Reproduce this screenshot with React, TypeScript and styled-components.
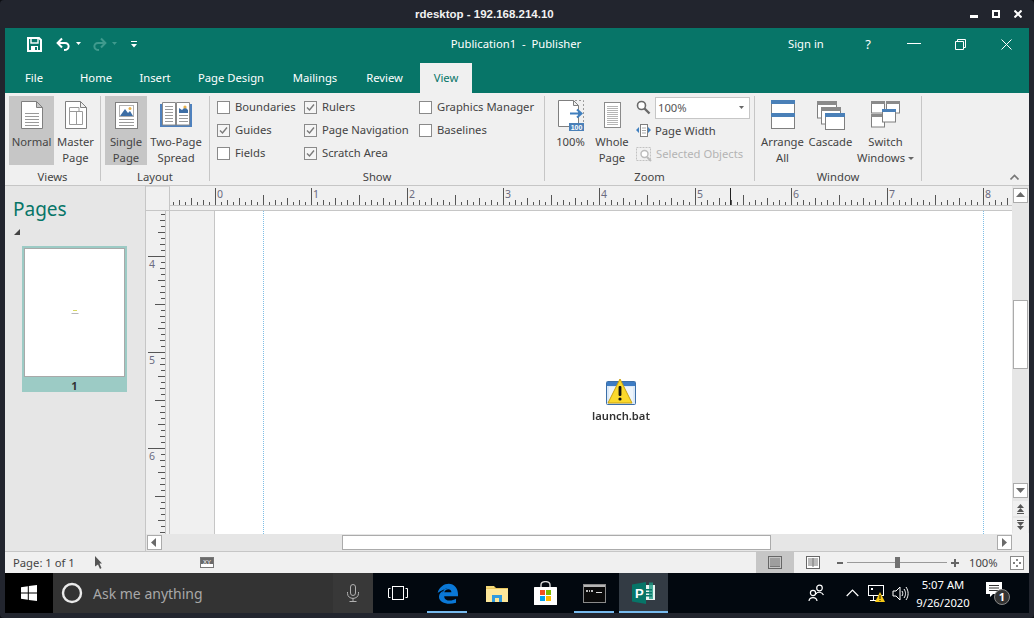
import React from "react";
import styled, { createGlobalStyle } from "styled-components";

const UI = `"Noto Sans", "Open Sans", "Liberation Sans", sans-serif`;
const FS = "11.25px";
const TEAL = "#077568";
const LINE = "#c6c6c6";
const SCROLL = "#ababab";

const Global = createGlobalStyle`
  html, body { margin: 0; padding: 0; background: #0c0e12; overflow: hidden; }
  * { box-sizing: border-box; }
  svg { display: block; flex: none; }
`;

const Frame = styled.div`
  width: 1034px; height: 618px; background: #22252e; display: flex; flex-direction: column;
  padding: 0 5px 5px; border-radius: 4px; font-family: ${UI}; font-size: ${FS}; color: #444;
`;
const TitleBar = styled.div`
  height: 28px; flex: none; display: grid; grid-template-columns: 410px auto 1fr; align-items: center; color: #fff;
`;
const TitleText = styled.div`
  font-family: "Liberation Sans", sans-serif; font-weight: 700; font-size: 11.5px; color: #f2f2f2;
`;
const RemoteControls = styled.div`
  justify-self: end; display: flex; gap: 14px; padding-right: 7px;
`;
const Window = styled.div`
  flex: 1; min-height: 0; display: flex; flex-direction: column; background: #f0f0f0;
`;
const Header = styled.div`
  height: 65px; flex: none; background: ${TEAL}; display: flex; flex-direction: column;
`;
const QatRow = styled.div`
  height: 32px; display: grid; grid-template-columns: 1fr auto 1fr; align-items: center; color: #fff;
`;
const Qat = styled.div`
  display: flex; align-items: center; padding-left: 22px;
`;
const QatItem = styled.span<{ $ml?: number }>`
  margin-left: ${p => p.$ml ?? 0}px; display: block;
`;
const DocTitle = styled.div`
  font-size: ${FS}; color: #fff; white-space: pre; margin: 0 0 2px -2px;
`;
const AccountArea = styled.div`
  justify-self: end; display: flex; align-items: center;
`;
const SignIn = styled.span`
  color: #fff; font-size: ${FS}; width: 57px; margin-bottom: 2px;
`;
const CaptionBtn = styled.span`
  width: 46px; display: flex; justify-content: center; color: #fff; font-size: 13px;
`;
const TabRow = styled.div`
  height: 33px; display: flex; align-items: flex-end;
`;
const Tab = styled.div<{ $w: number; $active?: boolean }>`
  width: ${p => p.$w}px; height: 30px; display: flex; align-items: center; justify-content: center;
  font-size: ${FS}; padding-bottom: 2px;
  color: ${p => (p.$active ? TEAL : "#fff")};
  background: ${p => (p.$active ? "#f0f0f0" : "transparent")};
`;
const Ribbon = styled.div`
  height: 93px; flex: none; display: flex; padding-top: 3px; background: #f0f0f0; border-bottom: 1px solid ${LINE};
`;
const Group = styled.div<{ $w: number }>`
  width: ${p => p.$w}px; height: 85px; display: flex; flex-direction: column;
  border-right: 1px solid ${LINE}; flex: none;
`;
const GroupBody = styled.div<{ $pl: number }>`
  height: 73px; flex: none; display: flex; padding-left: ${p => p.$pl}px;
`;
const GroupLabel = styled.div`
  text-align: center; font-size: ${FS}; line-height: 15px; color: #444;
`;
const BigBtn = styled.div<{ $w: number; $active?: boolean; $ml?: number }>`
  width: ${p => p.$w}px; height: 69px; flex: none; display: flex; flex-direction: column; align-items: center;
  padding-top: 3px; margin-left: ${p => p.$ml ?? 0}px;
  background: ${p => (p.$active ? LINE : "transparent")};
`;
const BigLabel = styled.div`
  margin-top: 3px; text-align: center; line-height: 16px; font-size: ${FS}; white-space: pre; color: #444;
`;
const Caret = styled.i`
  display: inline-block; width: 0; height: 0; border: 3px solid transparent; border-top: 3px solid #666; border-bottom: 0;
  margin-left: 3px; vertical-align: 2px;
`;
const CheckCol = styled.div<{ $w: number }>`
  width: ${p => p.$w}px; display: flex; flex-direction: column;
`;
const CheckRow = styled.div`
  height: 23px; display: flex; align-items: center; gap: 5px; font-size: ${FS}; color: #444; white-space: nowrap;
`;
const CheckText = styled.span`
  margin-bottom: 2px;
`;
const Box = styled.span`
  width: 13px; height: 13px; border: 1px solid #8a8a8a; background: #fff; display: block; flex: none;
`;
const ZoomCol = styled.div`
  margin-left: 4px; display: flex; flex-direction: column; width: 116px;
`;
const ZoomRow = styled.div<{ $off?: boolean }>`
  height: 23px; display: flex; align-items: center; gap: 4px; white-space: nowrap; font-size: ${FS};
  color: ${p => (p.$off ? "#b4b4b4" : "#444")};
`;
const Combo = styled.div`
  width: 95px; height: 22px; border: 1px solid ${LINE}; background: #fff; display: flex; align-items: center;
  justify-content: space-between; padding: 0 5px 0 2px; color: #555; font-size: ${FS};
`;
const Collapse = styled.div`
  flex: 1; display: flex; align-items: flex-end; justify-content: flex-end; padding: 0 10px 5px 0;
`;
const Main = styled.div`
  flex: 1; min-height: 0; display: flex;
`;
const PagesPane = styled.div`
  width: 140px; flex: none; background: #e6e6e6; padding: 9px 0 0 8px;
`;
const PagesTitle = styled.div`
  color: ${TEAL}; font-size: 19px; line-height: 28px; font-weight: 400;
`;
const Expander = styled.div`
  width: 0; height: 0; margin: 6px 0 0 1px; border-left: 6px solid transparent; border-bottom: 6px solid #444;
`;
const Thumb = styled.div`
  margin: 11px 0 0 9px; width: 105px; height: 146px; background: #9ccbc5; padding: 2px; display: flex; flex-direction: column;
`;
const ThumbPage = styled.div`
  height: 129px; flex: none; background: #fff; border: 1px solid #a9a9a9; display: flex; align-items: center; justify-content: center;
`;
const ThumbNum = styled.div`
  flex: 1; text-align: center; font-weight: 700; font-size: 11px; line-height: 15px; color: #333; padding-top: 1px;
`;
const Workspace = styled.div`
  flex: 1; min-width: 0; display: flex; border-left: 1px solid ${LINE};
`;
const CanvasCol = styled.div`
  flex: 1; min-width: 0; display: flex; flex-direction: column;
`;
const RulerRow = styled.div`
  height: 25px; flex: none; display: flex; border-bottom: 1px solid ${LINE}; background: #f0f0f0;
`;
const Corner = styled.div`
  width: 24px; flex: none; border-right: 1px solid ${LINE}; border-top: 1px solid #d8d8d8;
`;
const Body = styled.div`
  flex: 1; min-height: 0; display: flex;
`;
const VRuler = styled.div`
  width: 24px; flex: none; border-right: 1px solid ${LINE}; background: #f0f0f0; overflow: hidden;
`;
const Gutter = styled.div`
  width: 44px; flex: none; background: #f0f0f0;
`;
const Page = styled.div`
  flex: 1; position: relative; background: #fff; border-left: 1px solid ${LINE}; overflow: hidden;
`;
const Guide = styled.div<{ $x: number }>`
  position: absolute; top: 0; bottom: 0; left: ${p => p.$x}px; width: 0; border-left: 1px dotted #7fbfe6;
`;
const DesktopFile = styled.div`
  position: absolute; left: 373px; top: 167px; width: 66px; display: flex; flex-direction: column; align-items: center;
`;
const FileName = styled.div`
  font-size: 11.2px; line-height: 14px; margin-top: 3px; color: #333; font-weight: 600; filter: blur(0.45px);
`;
const HScroll = styled.div`
  height: 17px; flex: none; background: #e6e6e6; display: flex; align-items: center; padding: 0 0 0 1px;
`;
const SBtn = styled.div<{ $plain?: boolean }>`
  width: 15px; height: 15px; flex: none; display: flex; align-items: center; justify-content: center;
  background: ${p => (p.$plain ? "#f0f0f0" : "#fff")}; border: 1px solid ${p => (p.$plain ? "#f0f0f0" : SCROLL)};
`;
const HThumb = styled.div`
  margin-left: 180px; width: 429px; height: 15px; background: #fff; border: 1px solid ${SCROLL}; flex: none;
`;
const Spring = styled.div`
  flex: 1;
`;
const VScroll = styled.div`
  width: 17px; flex: none; display: flex; flex-direction: column; background: #e6e6e6; padding: 2px 0 0 1px;
`;
const VThumb = styled.div`
  margin-top: 97px; width: 15px; height: 69px; background: #fff; border: 1px solid ${SCROLL}; flex: none;
`;
const VSpace = styled.div<{ $h: number }>`
  height: ${p => p.$h}px; flex: none;
`;
const VCorner = styled.div`
  flex: 1; background: #f0f0f0; margin: 0 0 0 -1px;
`;
const StatusBar = styled.div`
  height: 22px; flex: none; display: flex; align-items: center; background: #f0f0f0; border-top: 1px solid ${LINE}; font-size: ${FS}; color: #444;
`;
const StatusText = styled.div<{ $w: number; $ml?: number }>`
  width: ${p => p.$w}px; margin-left: ${p => p.$ml ?? 0}px; white-space: nowrap; flex: none;
`;
const ViewBtn = styled.div<{ $active?: boolean; $mr?: number }>`
  width: 38px; height: 21px; display: flex; align-items: center; justify-content: center; flex: none;
  margin-right: ${p => p.$mr ?? 0}px;
  background: ${p => (p.$active ? LINE : "transparent")};
`;
const Slider = styled.div`
  position: relative; width: 100px; height: 1px; background: #9a9a9a; margin: 0 4px 0 3px; flex: none;
`;
const SliderThumb = styled.div`
  position: absolute; left: 48px; top: -5px; width: 5px; height: 11px; background: #707070;
`;
const Taskbar = styled.div`
  height: 40px; flex: none; display: flex; background: #02080f; color: #fff;
`;
const Start = styled.div`
  width: 48px; background: #000; display: flex; align-items: center; justify-content: center;
`;
const Search = styled.div`
  width: 320px; background: #333; display: flex; align-items: center; padding-left: 8px;
  color: #a8a8a8; font-size: 14px;
`;
const SearchText = styled.span`
  margin-left: 10px; flex: 1;
`;
const MicSlot = styled.div`
  width: 40px; height: 40px; background: #383838; display: flex; align-items: center; justify-content: center;
`;
const TaskItem = styled.div<{ $w?: number; $open?: boolean; $focus?: boolean }>`
  position: relative; width: ${p => p.$w ?? 49}px; flex: none; display: flex; align-items: center; justify-content: center;
  background: ${p => (p.$focus ? "#333b44" : "transparent")};
  ${p => p.$open ? `&::after { content: ""; position: absolute; bottom: 0; left: ${p.$focus ? 0 : 4}px; right: ${p.$focus ? 0 : 5}px; height: 2px; background: #76b9ed; }` : ""}
`;
const Tray = styled.div`
  flex: 1; display: flex; align-items: center; padding-left: 138px;
`;
const TraySlot = styled.div<{ $w: number; $ml?: number }>`
  width: ${p => p.$w}px; margin-left: ${p => p.$ml ?? 0}px; flex: none; display: flex; justify-content: center; align-items: center;
`;
const Clock = styled.div`
  width: 58px; flex: none; text-align: center; font-size: ${FS}; line-height: 18px; color: #fff; margin-left: 2px; white-space: nowrap; padding-top: 1px;
`;

const Lines = ({ x1, x2, ys, c = "#9a9a9a" }: { x1: number; x2: number; ys: number[]; c?: string }) => (
  <>{ys.map(y => <path key={y} d={`M${x1} ${y + 0.5}H${x2}`} stroke={c} />)}</>
);

const Doc = () => (
  <path d="M5.5 2.5H20.5L26.5 8.5V29.5H5.5Z M20.5 2.5V8.5H26.5" fill="#fff" stroke="#7f7f7f" />
);

const NormalIcon = () => (
  <svg width="32" height="32"><Doc /><Lines x1={9} x2={23} ys={[14, 17, 20, 23, 26]} /></svg>
);
const MasterIcon = () => (
  <svg width="32" height="32">
    <Doc />
    <path d="M9.5 8.5H19V12.5H22.5V25.5H9.5Z M9.5 12.5H19 M16.5 12.5V25.5" fill="none" stroke="#9a9a9a" />
  </svg>
);
const SingleIcon = () => (
  <svg width="32" height="32">
    <rect x="5.5" y="3.5" width="22" height="26" fill="#fff" stroke="#7f7f7f" />
    <rect x="9.5" y="6.5" width="14" height="11" fill="#fff" stroke="#b0b0b0" />
    <path d="M10 17L15 10L18 14L20 12L23 17Z" fill="#3d6ea5" />
    <circle cx="20" cy="9.5" r="1.5" fill="#e8b24c" />
    <Lines x1={9} x2={24} ys={[20, 23, 26]} />
  </svg>
);
const SpreadIcon = () => (
  <svg width="32" height="32">
    <path d="M0 5H32V28H0Z" fill="#4f81bd" />
    <path d="M2.5 3.5H15.5V26H2.5Z M16.5 3.5H29.5V26H16.5Z" fill="#fff" stroke="#8a8a8a" />
    <rect x="19" y="6" width="9" height="8" fill="#3d6ea5" />
    <path d="M19 6H28V11L25 8L22 11L19 9Z" fill="#fff" />
    <circle cx="25" cy="8" r="1.6" fill="#e8b24c" />
    <Lines x1={5} x2={13} ys={[7, 10, 13, 16, 19, 22]} />
    <Lines x1={19} x2={28} ys={[16, 19, 22]} />
  </svg>
);
const Zoom100Icon = () => (
  <svg width="32" height="32">
    <path d="M3.5 1.5H18.5L23.5 6.5V27.5H3.5Z M18.5 1.5V6.5H23.5" fill="#fff" stroke="#7f7f7f" />
    <path d="M20 1.5H28.5V24" fill="none" stroke="#9a9a9a" strokeDasharray="2 2" />
    <path d="M15 14.5H26M22 10.5L26.5 14.5L22 18.5" fill="none" stroke="#3f7fbf" strokeWidth="2" />
    <rect x="14" y="24" width="15" height="8" fill="#4a80b8" />
    <text x="21.5" y="31" textAnchor="middle" fontSize="7" fontWeight="700" fontFamily="Liberation Sans" fill="#fff">100</text>
  </svg>
);
const WholeIcon = () => (
  <svg width="32" height="32">
    <rect x="8.5" y="3.5" width="16" height="25" fill="#fff" stroke="#8a8a8a" />
    <Lines x1={11} x2={22} ys={[7, 9, 11, 13, 15, 17, 19, 21, 23, 25]} c="#b5b5b5" />
  </svg>
);
const ArrangeIcon = () => (
  <svg width="32" height="32">
    <rect x="4.5" y="1.5" width="23" height="28" fill="#fff" stroke="#7f7f7f" />
    <rect x="4" y="1" width="24" height="4" fill="#4a80b8" />
    <rect x="4" y="14" width="24" height="4" fill="#4a80b8" />
  </svg>
);
const CascadeIcon = () => (
  <svg width="32" height="32">
    <rect x="2.5" y="3" width="19" height="16" fill="#fff" stroke="#7f7f7f" />
    <rect x="2" y="2" width="20" height="4" fill="#8a8a8a" />
    <rect x="6.5" y="9" width="19" height="16" fill="#fff" stroke="#7f7f7f" />
    <rect x="6" y="8" width="20" height="4" fill="#8a8a8a" />
    <rect x="10.5" y="14.5" width="19" height="16" fill="#fff" stroke="#7f7f7f" />
    <rect x="10" y="14" width="20" height="4" fill="#4a80b8" />
  </svg>
);
const SwitchIcon = () => (
  <svg width="32" height="32">
    <rect x="1.5" y="3" width="13" height="11" fill="#fff" stroke="#7f7f7f" />
    <rect x="1" y="2" width="14" height="3" fill="#8a8a8a" />
    <rect x="16.5" y="3" width="13" height="11" fill="#fff" stroke="#7f7f7f" />
    <rect x="16" y="2" width="14" height="3" fill="#8a8a8a" />
    <rect x="1.5" y="16" width="13" height="12" fill="#fff" stroke="#7f7f7f" />
    <rect x="1" y="15" width="14" height="3" fill="#8a8a8a" />
    <rect x="12.5" y="11" width="13" height="12" fill="#fff" stroke="#7f7f7f" />
    <rect x="12" y="10" width="14" height="3" fill="#4a80b8" />
  </svg>
);
const Magnifier = ({ c = "#6a6a6a" }: { c?: string }) => (
  <svg width="15" height="15">
    <circle cx="5.5" cy="5.5" r="4" fill="#fff" stroke={c} strokeWidth="1.6" />
    <path d="M8.5 8.5L13.5 13.5" stroke={c} strokeWidth="2.4" />
  </svg>
);
const PageWidthIcon = () => (
  <svg width="15" height="15">
    <rect x="4.5" y="1.5" width="7" height="12" fill="#fff" stroke="#7f7f7f" />
    <path d="M6 5H10M6 7.5H10M6 10H10" stroke="#aaa" />
    <path d="M3 4V10L0 7Z M12 4V10L15 7Z" fill="#3f7fbf" />
  </svg>
);
const SelectedIcon = () => (
  <svg width="16" height="16">
    <rect x="0.5" y="1.5" width="14" height="13" fill="none" stroke="#c2c2c2" strokeDasharray="2 1" />
    <circle cx="8.5" cy="8" r="3.5" fill="#fff" stroke="#bbb" strokeWidth="1.4" />
    <path d="M11 11L15 15" stroke="#bbb" strokeWidth="2" />
  </svg>
);

const Check = () => (
  <svg width="13" height="13">
    <rect x="0.5" y="0.5" width="12" height="12" fill="#f5f5f5" stroke="#8a8a8a" />
    <path d="M3 6.5L5.5 9L10 3.5" fill="none" stroke="#7a7a7a" strokeWidth="1.4" />
  </svg>
);
const CheckItem = ({ label, on }: { label: string; on?: boolean }) => (
  <CheckRow>{on ? <Check /> : <Box />}<CheckText>{label}</CheckText></CheckRow>
);

const INCH = 96;
const HRuler = () => {
  const ticks: React.ReactNode[] = [];
  const labels: React.ReactNode[] = [];
  const origin = 45;
  for (let k = -7; k < 136; k++) {
    const x = origin + k * 6;
    if (x > 842) break;
    const m = ((k % 16) + 16) % 16;
    const h = m === 0 ? 17 : m === 8 ? 10 : m % 4 === 0 ? 7 : m % 2 === 0 ? 5 : 3;
    ticks.push(<path key={k} d={`M${x + 0.5} 19V${19 - h}`} stroke="#555" />);
  }
  for (let n = 0; n <= 8; n++) {
    labels.push(
      <text key={n} x={origin + n * INCH + 2} y={12} fontSize="10.5" fontFamily="Noto Sans" fill="#6b6b80">{n}</text>
    );
  }
  return (
    <svg width="843" height="24">
      <rect x="0" y="19" width="843" height="1" fill={LINE} />
      {ticks}
      {labels}
      <path d="M560.5 2V19" stroke="#222" />
    </svg>
  );
};
const VRulerArt = () => {
  const ticks: React.ReactNode[] = [];
  const origin = 45;
  for (let k = -8; k < 48; k++) {
    const y = origin + k * 6;
    const m = ((k % 16) + 16) % 16;
    const w = m === 0 ? 17 : m === 8 ? 10 : m % 4 === 0 ? 7 : m % 2 === 0 ? 5 : 4;
    ticks.push(<path key={k} d={`M${19 - w} ${y + 0.5}H19`} stroke="#555" />);
  }
  return (
    <svg width="23" height="323">
      <rect x="19" y="0" width="1" height="323" fill={LINE} />
      {ticks}
      {[4, 5, 6].map((n, i) => (
        <text key={n} x="3" y={origin + i * INCH + 12} fontSize="10.5" fontFamily="Noto Sans" fill="#6b6b80">{n}</text>
      ))}
    </svg>
  );
};

const Tri = ({ dir, c = "#6a6a6a" }: { dir: "u" | "d" | "l" | "r"; c?: string }) => {
  const d = { u: "M0 6L4.5 1L9 6Z", d: "M0 2L9 2L4.5 7Z", l: "M6 0V9L1 4.5Z", r: "M2 0V9L7 4.5Z" }[dir];
  return <svg width="9" height="9"><path d={d} fill={c} /></svg>;
};
const DoubleUp = () => (
  <svg width="9" height="11"><path d="M1 5L4.5 1L8 5Z M1 9L4.5 5L8 9Z M1 10H8V11H1Z" fill="#555" /></svg>
);
const DoubleDown = () => (
  <svg width="9" height="11"><path d="M1 0H8V1H1Z M1 2L4.5 6L8 2Z M1 6L4.5 10L8 6Z" fill="#555" /></svg>
);

const WarnFile = () => (
  <svg width="32" height="28">
    <rect x="1.5" y="3.5" width="29" height="23" rx="1" fill="#dbe9f7" stroke="#3c6fa8" />
    <rect x="2" y="4" width="28" height="4" fill="#3d7cc4" />
    <rect x="4" y="9" width="24" height="16" fill="#eef5fb" />
    <path d="M15 1L27 25H3Z" fill="#fbd92b" stroke="#c9a010" strokeLinejoin="round" />
    <rect x="13.6" y="8" width="2.8" height="10" rx="1" fill="#111" />
    <circle cx="15" cy="21" r="1.6" fill="#111" />
  </svg>
);

const SaveIcon = () => (
  <svg width="15" height="15">
    <path d="M1 1H12L14 3V14H1Z" fill="none" stroke="#fff" strokeWidth="2" />
    <rect x="4" y="1" width="7" height="5" fill="none" stroke="#fff" strokeWidth="1.4" />
    <rect x="4" y="9" width="7" height="5" fill="#fff" />
    <rect x="8" y="10" width="2" height="3" fill={TEAL} />
  </svg>
);
const UndoIcon = ({ c, flip }: { c: string; flip?: boolean }) => (
  <svg width="15" height="14" transform={flip ? "scale(-1 1)" : undefined}>
    <path d="M2 6H9C14 6 14 13 8 13" fill="none" stroke={c} strokeWidth="2" />
    <path d="M6 1.5L1.6 6L6 10.5" fill="none" stroke={c} strokeWidth="2" />
  </svg>
);
const TinyCaret = ({ c }: { c: string }) => (
  <svg width="5" height="4"><path d="M0 0H5L2.5 3Z" fill={c} /></svg>
);
const CustomizeIcon = () => (
  <svg width="6" height="7"><path d="M0 0H6V1H0Z M0 3H6L3 6.5Z" fill="#fff" /></svg>
);

const WinLogo = () => (
  <svg width="16" height="16"><path d="M0 2.2L6.8 1.3V7.5H0Z M7.8 1.1L16 0V7.5H7.8Z M0 8.5H6.8V14.7L0 13.8Z M7.8 8.5H16V16L7.8 14.9Z" fill="#fff" /></svg>
);
const CortanaRing = () => (
  <svg width="22" height="22"><circle cx="11" cy="11" r="9" fill="none" stroke="#eaeaea" strokeWidth="2.4" /></svg>
);
const MicIcon = () => (
  <svg width="12" height="18">
    <rect x="3.5" y="0.5" width="5" height="11" rx="2.5" fill="none" stroke="#b0b0b0" />
    <path d="M0.5 8V9.5C0.5 16 11.5 16 11.5 9.5V8M6 14V17M2.5 17.5H9.5" fill="none" stroke="#b0b0b0" />
  </svg>
);
const TaskViewIcon = () => (
  <svg width="20" height="14">
    <rect x="4.5" y="0.5" width="11" height="13" fill="none" stroke="#fff" />
    <path d="M2.5 2.5H0.5V11.5H2.5M17.5 2.5H19.5V11.5H17.5" fill="none" stroke="#fff" />
  </svg>
);
const EdgeIcon = () => (
  <svg width="21" height="21" viewBox="0 0 32 32">
    <path fillRule="evenodd" fill="#0a78d7" d="M1 15C3 6 11 1 18 1C26 1 32 8 32 17V20H11C11 27 21 29 29 24V30C18 34 3 31 3 21C3 17 6 13 11 11C9 13 8 14 7.5 16C9 10 14 8 16 8C11 9 1 15 1 15Z M11 14H22C22 8 13 8 11 14Z" />
  </svg>
);
const FolderIcon = () => (
  <svg width="22" height="18">
    <path d="M0 2H8L10 4H22V18H0Z" fill="#e9c75f" />
    <path d="M0 5H22V18H0Z" fill="#fde79a" />
    <path d="M0 2H8V4H0Z" fill="#f3d878" />
    <path d="M6 18V11H16V18H13V14H9V18Z" fill="#2f9be0" />
  </svg>
);
const StoreIcon = () => (
  <svg width="23" height="24">
    <path d="M7 7V4C7 -0.5 16 -0.5 16 4V7" fill="none" stroke="#d8d8d8" strokeWidth="1.4" />
    <rect x="0" y="6" width="23" height="18" rx="0.5" fill="#fff" />
    <rect x="6" y="9" width="5" height="5" fill="#f25022" />
    <rect x="12" y="9" width="5" height="5" fill="#7fba00" />
    <rect x="6" y="15" width="5" height="5" fill="#00a4ef" />
    <rect x="12" y="15" width="5" height="5" fill="#ffb900" />
  </svg>
);
const CmdIcon = () => (
  <svg width="23" height="19">
    <rect x="0.5" y="0.5" width="22" height="18" fill="#0a0a0a" stroke="#8a8a8a" />
    <rect x="1" y="1" width="21" height="2" fill="#b5b5b5" />
    <path d="M3 6H5V8H3Z M6 6H7V8H6Z M8 6H10V8H8Z" fill="#bbb" />
    <rect x="13" y="8" width="6" height="1" fill="#ddd" />
  </svg>
);
const PublisherIcon = () => (
  <svg width="24" height="22">
    <path d="M10 3H23V18H10Z" fill="#e8f3f0" />
    <path d="M17 0.5H21V17H17Z" fill="#1d9a85" opacity="0.8" />
    <path d="M12 7H20V8.4H12Z M12 10H20V11.4H12Z M12 13H20V14.4H12Z" fill="#077568" />
    <path d="M0 2.6L14 0V22L0 19.6Z" fill="#077568" />
    <text x="3" y="16" fontSize="13" fontWeight="700" fontFamily="Liberation Sans" fill="#fff">P</text>
  </svg>
);
const PeopleIcon = () => (
  <svg width="16" height="18" viewBox="0 0 16 18">
    <circle cx="11.5" cy="4" r="2.8" fill="none" stroke="#fff" strokeWidth="1.2" />
    <path d="M8 10C9 7.5 14 7.5 15.5 11" fill="none" stroke="#fff" strokeWidth="1.2" />
    <circle cx="5" cy="9" r="2.6" fill="#02080f" stroke="#fff" strokeWidth="1.2" />
    <path d="M1 17C1.5 12.5 8.5 12.5 9 17" fill="none" stroke="#fff" strokeWidth="1.2" />
  </svg>
);
const ChevronIcon = () => (
  <svg width="13" height="8"><path d="M0.7 7L6.5 1L12.3 7" fill="none" stroke="#fff" strokeWidth="1.2" /></svg>
);
const NetworkIcon = () => (
  <svg width="17" height="17">
    <rect x="0.5" y="0.5" width="15" height="10" fill="none" stroke="#fff" />
    <rect x="3" y="3" width="2" height="2" fill="#fff" />
    <path d="M5.5 10.5V15.5M2 15.5H9" stroke="#fff" />
    <path d="M12 7L17 17H7Z" fill="#f7c815" />
    <rect x="11.5" y="10" width="1" height="4" fill="#111" />
    <rect x="11.5" y="15" width="1" height="1" fill="#111" />
  </svg>
);
const SpeakerIcon = () => (
  <svg width="17" height="15">
    <path d="M1 5H4L8 1V14L4 10H1Z" fill="none" stroke="#fff" />
    <path d="M10 5C11 6.5 11 8.5 10 10M12 3C14 6 14 9 12 12M14 1C16.8 5 16.8 10 14 14" fill="none" stroke="#fff" />
  </svg>
);
const NotifyIcon = () => (
  <svg width="26" height="26">
    <path d="M1 2H17V14H8L5 17V14H1Z" fill="#fff" />
    <path d="M4 5.5H14M4 8H14M4 10.5H14" stroke="#333" />
    <circle cx="17" cy="17" r="7.5" fill="#333" stroke="#888" />
    <text x="17" y="21" textAnchor="middle" fontSize="11" fontWeight="700" fontFamily="Noto Sans" fill="#fff">1</text>
  </svg>
);
const CursorIcon = () => (
  <svg width="8" height="13"><path d="M0 0L7 7.5H4.5L6.5 12L5 13L3 8.5L0 10.5Z" fill="#555" /></svg>
);
const XyIcon = () => (
  <svg width="14" height="11">
    <rect x="0.5" y="0.5" width="13" height="10" fill="#fff" stroke="#777" />
    <rect x="1" y="1" width="12" height="6" fill="#6a6a6a" />
    <text x="7" y="6.5" textAnchor="middle" fontSize="6" fontFamily="Liberation Sans" fill="#fff">XY</text>
  </svg>
);
const SingleViewIcon = () => (
  <svg width="14" height="13">
    <rect x="0.5" y="0.5" width="13" height="12" fill="none" stroke="#666" />
    <path d="M2 3H12M2 5H12M2 7H12M2 9H12M2 10.5H12" stroke="#777" />
  </svg>
);
const TwoViewIcon = () => (
  <svg width="14" height="13">
    <rect x="0.5" y="0.5" width="13" height="12" fill="#fff" stroke="#666" />
    <path d="M2 3H12M2 5H12M2 7H12M2 9H12M7 2V11" stroke="#777" />
  </svg>
);
const FitIcon = () => (
  <svg width="14" height="14">
    <rect x="0.5" y="0.5" width="13" height="13" fill="#fff" stroke="#8a8a8a" />
    <path d="M7 3V5M7 9V11M3 7H5M9 7H11" stroke="#555" strokeWidth="1.4" />
  </svg>
);
const MinusIcon = () => (
  <svg width="8" height="8"><rect x="1" y="3" width="6" height="2" fill="#666" /></svg>
);
const PlusIcon = () => (
  <svg width="8" height="8"><path d="M0 3H8V5H0Z M3 0H5V8H3Z" fill="#666" /></svg>
);

export default function App() {
  return (
    <>
      <Global />
      <Frame>
        <TitleBar>
          <span />
          <TitleText>rdesktop - 192.168.214.10</TitleText>
          <RemoteControls>
            <svg width="8" height="8"><rect y="5" width="8" height="3" fill="#fff" /></svg>
            <svg width="8" height="8"><rect x="1" y="1" width="6" height="6" fill="none" stroke="#fff" strokeWidth="2" /></svg>
            <svg width="8" height="8"><path d="M0.5 0.5L7.5 7.5M7.5 0.5L0.5 7.5" stroke="#fff" strokeWidth="2" /></svg>
          </RemoteControls>
        </TitleBar>
        <Window>
          <Header>
            <QatRow>
              <Qat>
                <SaveIcon />
                <QatItem $ml={14}><UndoIcon c="#fff" /></QatItem>
                <QatItem $ml={5}><TinyCaret c="#fff" /></QatItem>
                <QatItem $ml={11}><UndoIcon c="#3f9a8d" flip /></QatItem>
                <QatItem $ml={5}><TinyCaret c="#3f9a8d" /></QatItem>
                <QatItem $ml={14}><CustomizeIcon /></QatItem>
              </Qat>
              <DocTitle>Publication1  -  Publisher</DocTitle>
              <AccountArea>
                <SignIn>Sign in</SignIn>
                <CaptionBtn>?</CaptionBtn>
                <CaptionBtn><svg width="14" height="2"><rect width="14" height="1" fill="#fff" /></svg></CaptionBtn>
                <CaptionBtn>
                  <svg width="11" height="11"><path d="M0.5 2.5H8.5V10.5H0.5Z M2.5 2.5V0.5H10.5V8.5H8.5" fill="none" stroke="#fff" /></svg>
                </CaptionBtn>
                <CaptionBtn>
                  <svg width="11" height="11"><path d="M0.5 0.5L10.5 10.5M10.5 0.5L0.5 10.5" stroke="#fff" /></svg>
                </CaptionBtn>
              </AccountArea>
            </QatRow>
            <TabRow>
              <Tab $w={58}>File</Tab>
              <Tab $w={66}>Home</Tab>
              <Tab $w={52}>Insert</Tab>
              <Tab $w={100}>Page Design</Tab>
              <Tab $w={68}>Mailings</Tab>
              <Tab $w={71}>Review</Tab>
              <Tab $w={52} $active>View</Tab>
            </TabRow>
          </Header>
          <Ribbon>
            <Group $w={96}>
              <GroupBody $pl={4}>
                <BigBtn $w={45} $active><NormalIcon /><BigLabel>Normal</BigLabel></BigBtn>
                <BigBtn $w={43}><MasterIcon /><BigLabel>{"Master\nPage"}</BigLabel></BigBtn>
              </GroupBody>
              <GroupLabel>Views</GroupLabel>
            </Group>
            <Group $w={109}>
              <GroupBody $pl={4}>
                <BigBtn $w={42} $active><SingleIcon /><BigLabel>{"Single\nPage"}</BigLabel></BigBtn>
                <BigBtn $w={58}><SpreadIcon /><BigLabel>{"Two-Page\nSpread"}</BigLabel></BigBtn>
              </GroupBody>
              <GroupLabel>Layout</GroupLabel>
            </Group>
            <Group $w={335}>
              <GroupBody $pl={7}>
                <CheckCol $w={87}>
                  <CheckItem label="Boundaries" />
                  <CheckItem label="Guides" on />
                  <CheckItem label="Fields" />
                </CheckCol>
                <CheckCol $w={115}>
                  <CheckItem label="Rulers" on />
                  <CheckItem label="Page Navigation" on />
                  <CheckItem label="Scratch Area" on />
                </CheckCol>
                <CheckCol $w={120}>
                  <CheckItem label="Graphics Manager" />
                  <CheckItem label="Baselines" />
                </CheckCol>
              </GroupBody>
              <GroupLabel>Show</GroupLabel>
            </Group>
            <Group $w={210}>
              <GroupBody $pl={7}>
                <BigBtn $w={37}><Zoom100Icon /><BigLabel>100%</BigLabel></BigBtn>
                <BigBtn $w={40} $ml={3}><WholeIcon /><BigLabel>{"Whole\nPage"}</BigLabel></BigBtn>
                <ZoomCol>
                  <ZoomRow>
                    <Magnifier />
                    <Combo>100%<TinyCaret c="#666" /></Combo>
                  </ZoomRow>
                  <ZoomRow><PageWidthIcon />Page Width</ZoomRow>
                  <ZoomRow $off><SelectedIcon />Selected Objects</ZoomRow>
                </ZoomCol>
              </GroupBody>
              <GroupLabel>Zoom</GroupLabel>
            </Group>
            <Group $w={167}>
              <GroupBody $pl={5}>
                <BigBtn $w={45}><ArrangeIcon /><BigLabel>{"Arrange\nAll"}</BigLabel></BigBtn>
                <BigBtn $w={47} $ml={2}><CascadeIcon /><BigLabel>Cascade</BigLabel></BigBtn>
                <BigBtn $w={59} $ml={2}><SwitchIcon /><BigLabel>Switch<br />Windows<Caret /></BigLabel></BigBtn>
              </GroupBody>
              <GroupLabel>Window</GroupLabel>
            </Group>
            <Collapse>
              <svg width="9" height="6"><path d="M0.5 5.5L4.5 1.5L8.5 5.5" fill="none" stroke="#777" strokeWidth="1.6" /></svg>
            </Collapse>
          </Ribbon>
          <Main>
            <PagesPane>
              <PagesTitle>Pages</PagesTitle>
              <Expander />
              <Thumb>
                <ThumbPage>
                  <svg width="8" height="5"><path d="M2 0.5H6" stroke="#d8d860" /><path d="M0.5 3.5H7.5" stroke="#b8b8b8" /></svg>
                </ThumbPage>
                <ThumbNum>1</ThumbNum>
              </Thumb>
            </PagesPane>
            <Workspace>
              <CanvasCol>
                <RulerRow>
                  <Corner />
                  <HRuler />
                </RulerRow>
                <Body>
                  <VRuler><VRulerArt /></VRuler>
                  <Gutter />
                  <Page>
                    <Guide $x={48} />
                    <Guide $x={768} />
                    <DesktopFile>
                      <WarnFile />
                      <FileName>launch.bat</FileName>
                    </DesktopFile>
                  </Page>
                </Body>
                <HScroll>
                  <SBtn><Tri dir="l" /></SBtn>
                  <HThumb />
                  <Spring />
                  <SBtn><Tri dir="r" /></SBtn>
                </HScroll>
              </CanvasCol>
              <VScroll>
                <SBtn><Tri dir="u" /></SBtn>
                <VThumb />
                <VSpace $h={114} />
                <SBtn><Tri dir="d" /></SBtn>
                <VSpace $h={3} />
                <SBtn $plain><DoubleUp /></SBtn>
                <VSpace $h={2} />
                <SBtn $plain><DoubleDown /></SBtn>
                <VCorner />
              </VScroll>
            </Workspace>
          </Main>
          <StatusBar>
            <StatusText $w={82} $ml={8}>Page: 1 of 1</StatusText>
            <CursorIcon />
            <StatusText $w={97} />
            <XyIcon />
            <Spring />
            <ViewBtn $active><SingleViewIcon /></ViewBtn>
            <ViewBtn $mr={4}><TwoViewIcon /></ViewBtn>
            <MinusIcon />
            <Slider><SliderThumb /></Slider>
            <PlusIcon />
            <StatusText $w={41} $ml={10}>100%</StatusText>
            <FitIcon />
            <StatusText $w={5} />
          </StatusBar>
          <Taskbar>
            <Start><WinLogo /></Start>
            <Search>
              <CortanaRing />
              <SearchText>Ask me anything</SearchText>
              <MicSlot><MicIcon /></MicSlot>
            </Search>
            <TaskItem $w={50}><TaskViewIcon /></TaskItem>
            <TaskItem $open><EdgeIcon /></TaskItem>
            <TaskItem><FolderIcon /></TaskItem>
            <TaskItem><StoreIcon /></TaskItem>
            <TaskItem $open><CmdIcon /></TaskItem>
            <TaskItem $open $focus><PublisherIcon /></TaskItem>
            <Tray>
              <TraySlot $w={20}><PeopleIcon /></TraySlot>
              <TraySlot $w={24} $ml={14}><ChevronIcon /></TraySlot>
              <TraySlot $w={24}><NetworkIcon /></TraySlot>
              <TraySlot $w={24}><SpeakerIcon /></TraySlot>
              <Clock>5:07 AM<br />9/26/2020</Clock>
              <TraySlot $w={30} $ml={11}><NotifyIcon /></TraySlot>
            </Tray>
          </Taskbar>
        </Window>
      </Frame>
    </>
  );
}
